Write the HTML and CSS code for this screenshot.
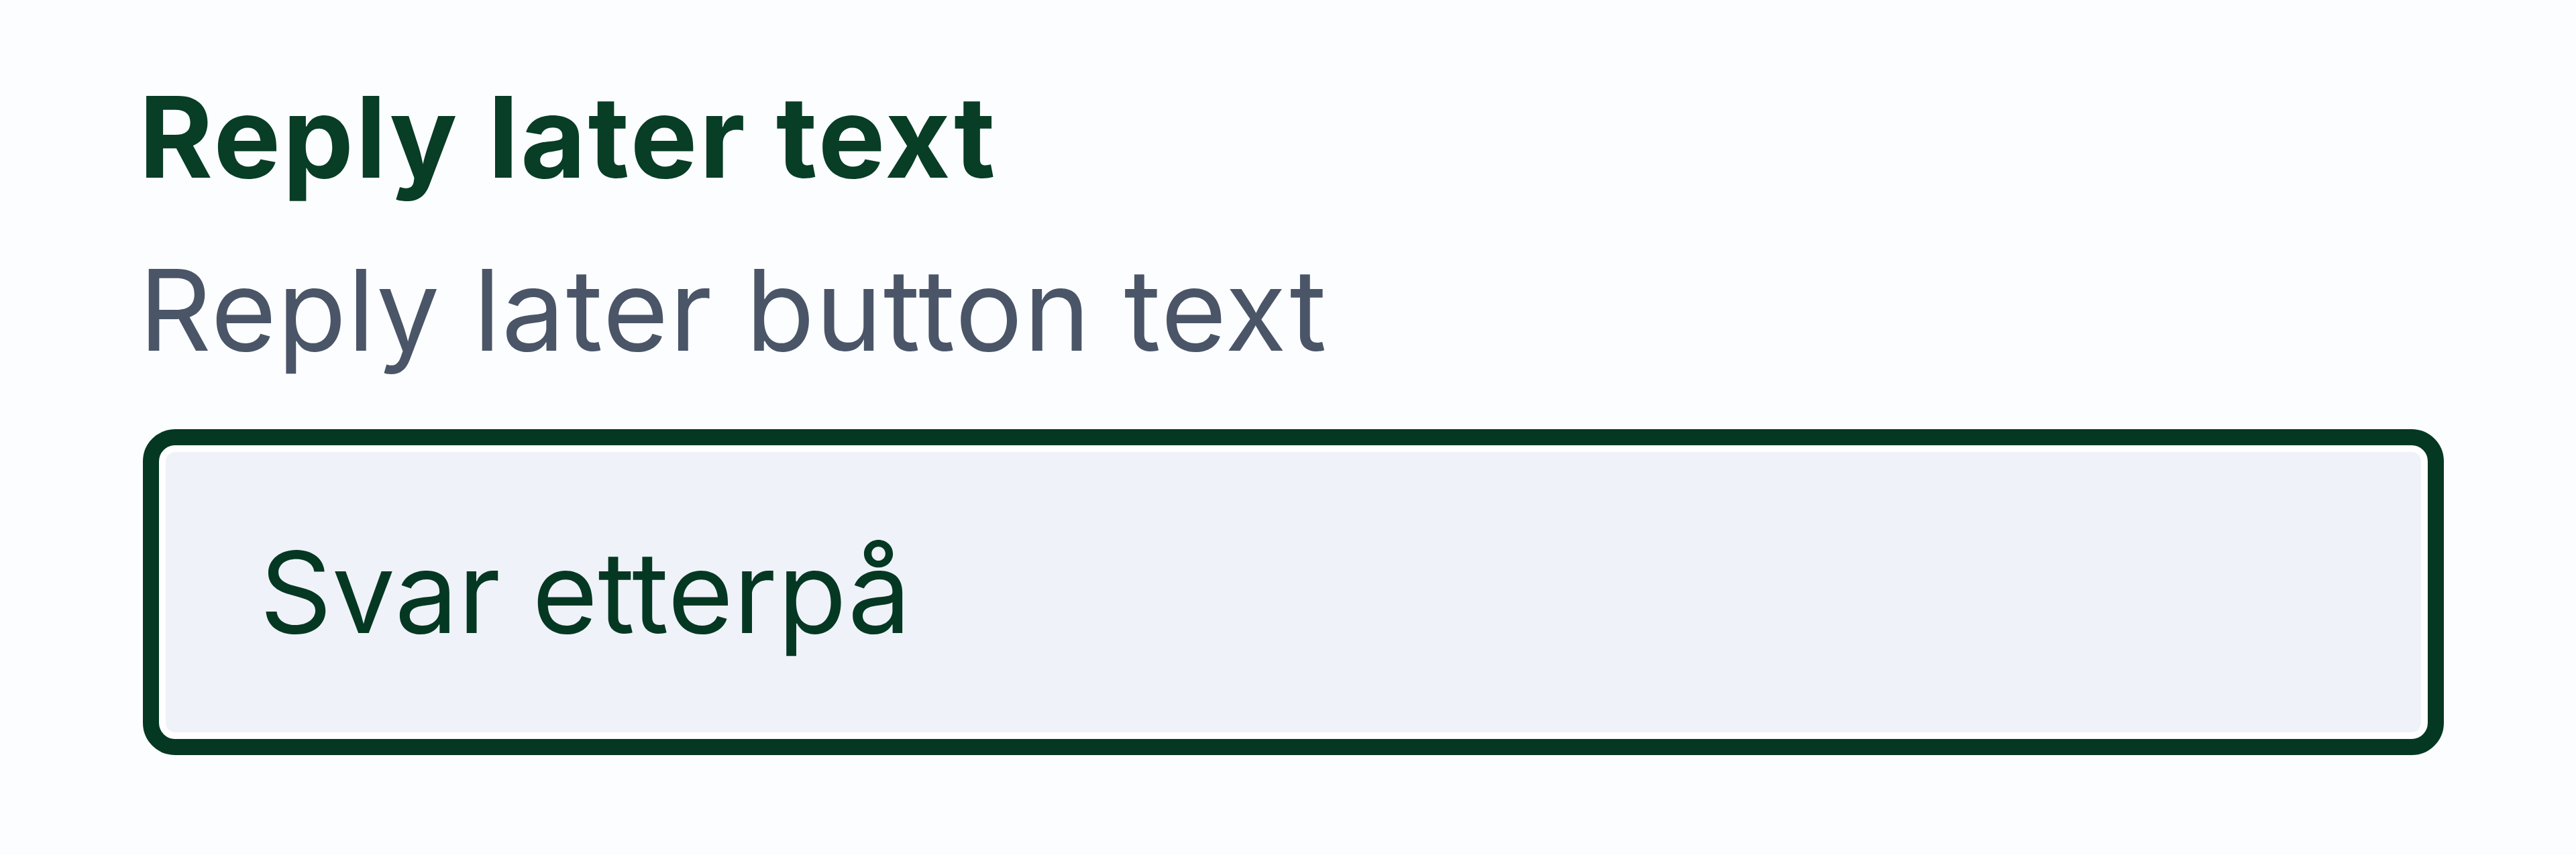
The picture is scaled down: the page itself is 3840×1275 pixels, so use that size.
FILE: index.html
```html
<!DOCTYPE html>
<html lang="no">
<head>
    <meta charset="UTF-8">
    <meta name="viewport" content="width=device-width, initial-scale=1.0">
    <title>Reply later text</title>
    <link rel="stylesheet" href="styles.css">
</head>
<body>
    <div class="field">
        <label class="field-label" for="reply-later">Reply later text</label>
        <p class="field-hint">Reply later button text</p>
        <input class="field-input" id="reply-later" type="text" value="Svar etterpå">
    </div>
</body>
</html>
```

FILE: styles.css
```css
body {
    margin: 0;
    background: #fcfdfe;
    font-family: Inter, "Noto Sans", sans-serif;
}
.field {
    display: flex;
    flex-direction: column;
    padding: 78px 197px 0 213px;
}
.field-label {
    margin-left: -6px;
    font-size: 168px;
    line-height: 252px;
    font-weight: 700;
    letter-spacing: 3px;
    color: #083d26;
}
.field-hint {
    margin: 6px 0 0 -6px;
    font-size: 168px;
    line-height: 252px;
    letter-spacing: 1.5px;
    color: #4a5568;
}
.field-input {
    margin-top: 52px;
    box-sizing: border-box;
    height: 486px;
    padding: 0 150px;
    border: 24px solid #053823;
    border-radius: 48px;
    box-shadow: inset 0 0 0 10px #ffffff;
    background: #eff2f8;
    font-family: inherit;
    font-size: 168px;
    color: #053823;
    outline: none;
}
```
